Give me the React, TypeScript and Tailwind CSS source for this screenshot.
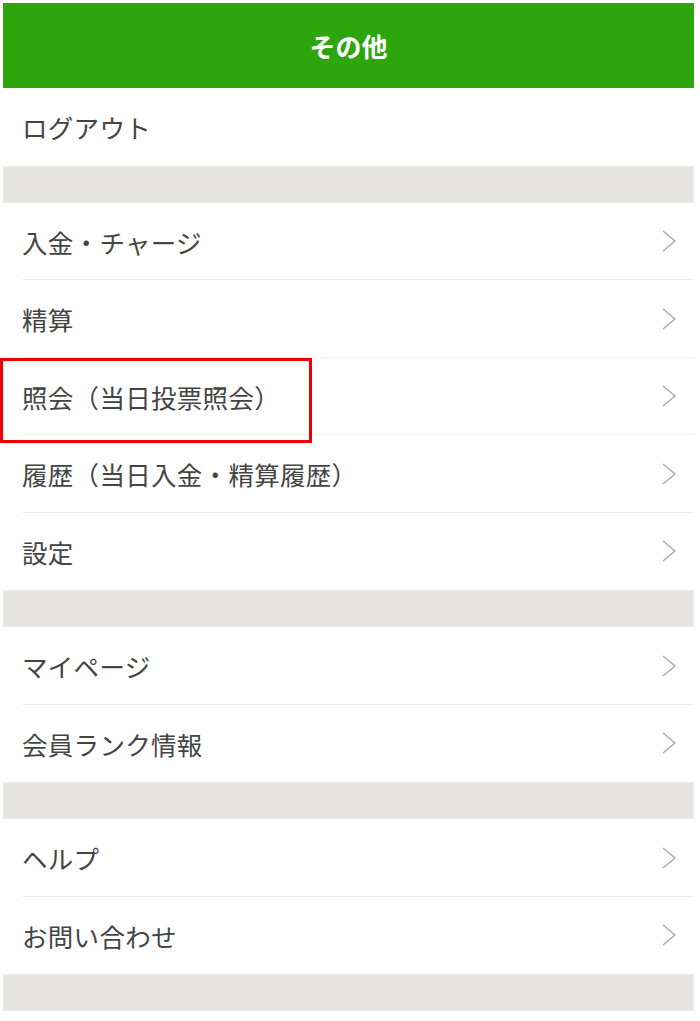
type Item = { label: string; arrow?: boolean; highlight?: boolean };

const groups: Item[][] = [
  [{ label: "ログアウト" }],
  [
    { label: "入金・チャージ", arrow: true },
    { label: "精算", arrow: true },
    { label: "照会（当日投票照会）", arrow: true, highlight: true },
    { label: "履歴（当日入金・精算履歴）", arrow: true },
    { label: "設定", arrow: true },
  ],
  [
    { label: "マイページ", arrow: true },
    { label: "会員ランク情報", arrow: true },
  ],
  [
    { label: "ヘルプ", arrow: true },
    { label: "お問い合わせ", arrow: true },
  ],
];

function Chevron() {
  return (
    <svg width="16" height="24" viewBox="0 0 16 24" fill="none" className="text-[#a9a9a9]">
      <polyline points="2,2 14,12 2,22" stroke="currentColor" strokeWidth="1.4" />
    </svg>
  );
}

function Row({ item, last }: { item: Item; last: boolean }) {
  return (
    <div className="relative h-[77.5px] bg-white">
      <div className="flex h-full items-center justify-between pl-[19px] pr-[17px]">
        <span className="text-[25.5px] leading-none tracking-[0.3px] text-[#444]">{item.label}</span>
        {item.arrow && <Chevron />}
      </div>
      {!last && <div className="absolute bottom-0 left-[19px] right-0 h-px bg-[#efefef]" />}
      {item.highlight && (
        <div className="pointer-events-none absolute left-[-3px] top-0 z-10 h-[85px] w-[312px] border-[3px] border-[#ee0000]" />
      )}
    </div>
  );
}

export default function App() {
  return (
    <div
      className="min-h-[1021px] bg-white pl-[3px] pr-[6px] pt-[3px]"
      style={{ fontFamily: '"Noto Sans CJK JP", "Noto Sans", sans-serif' }}
    >
      <header className="flex h-[85px] items-center justify-center bg-[#2ca60c]">
        <h1 className="text-[26px] font-bold text-white">その他</h1>
      </header>
      {groups.map((group, gi) => (
        <div key={gi}>
          {group.map((item, i) => (
            <Row key={item.label} item={item} last={i === group.length - 1} />
          ))}
          <div className="h-[37px] border border-[#ecebe8] bg-[#e6e5e1]" />
        </div>
      ))}
    </div>
  );
}
